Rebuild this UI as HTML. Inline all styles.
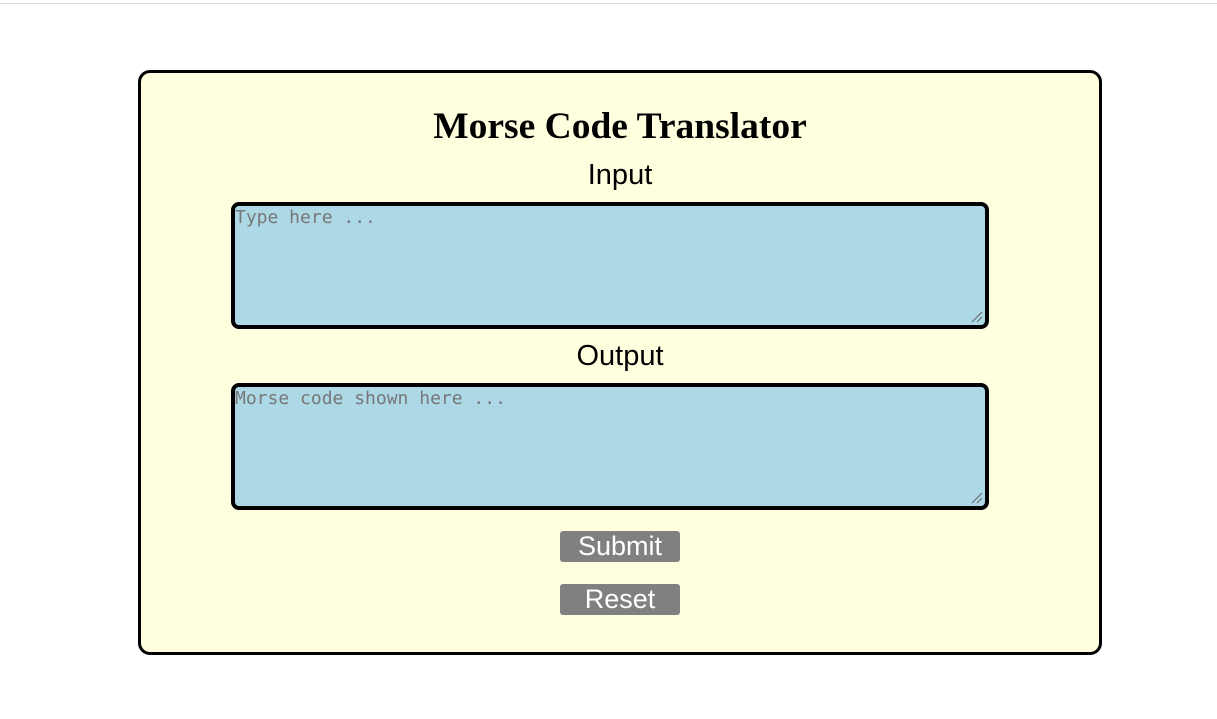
<!DOCTYPE html>
<html><head><style>
body{margin:0;width:1217px;height:719px;background:#fff;position:relative;overflow:hidden;font-family:"Liberation Sans",sans-serif}
.top{position:absolute;left:0;top:3px;width:1217px;height:1px;background:#ddd}
.card{position:absolute;left:138px;top:70px;width:958px;height:579px;border:3px solid #000;border-radius:12px;background:#ffffe0}
h1{position:absolute;left:138px;width:964px;top:105px;margin:0;text-align:center;font:bold 37.5px "Liberation Serif",serif;line-height:44px}
.lbl{position:absolute;left:138px;width:964px;text-align:center;font-size:29px;line-height:32px}
.ta{position:absolute;left:231px;width:750px;height:119px;border:4px solid #000;border-radius:8px;background:#add8e6;font:18px "DejaVu Sans Mono",monospace;color:#777;box-sizing:content-box}
.ta span{position:absolute;left:0;top:1px}
.rs{position:absolute;right:2px;bottom:2px;width:12px;height:12px}
.btn{position:absolute;left:560px;width:120px;height:31px;background:#808080;border-radius:3px;color:#fff;font-size:27px;line-height:31px;text-align:center}
</style></head><body>
<div class="top"></div>
<div class="card"></div>
<h1>Morse Code Translator</h1>
<div class="lbl" style="top:159px">Input</div>
<div class="ta" style="top:202px"><span>Type here ...</span><svg class="rs" viewBox="0 0 12 12"><path d="M11 1L1 11M11 6L6 11" stroke="#666" stroke-width="1"/></svg></div>
<div class="lbl" style="top:340px">Output</div>
<div class="ta" style="top:383px"><span>Morse code shown here ...</span><svg class="rs" viewBox="0 0 12 12"><path d="M11 1L1 11M11 6L6 11" stroke="#666" stroke-width="1"/></svg></div>
<div class="btn" style="top:531px">Submit</div>
<div class="btn" style="top:584px">Reset</div>
</body></html>
